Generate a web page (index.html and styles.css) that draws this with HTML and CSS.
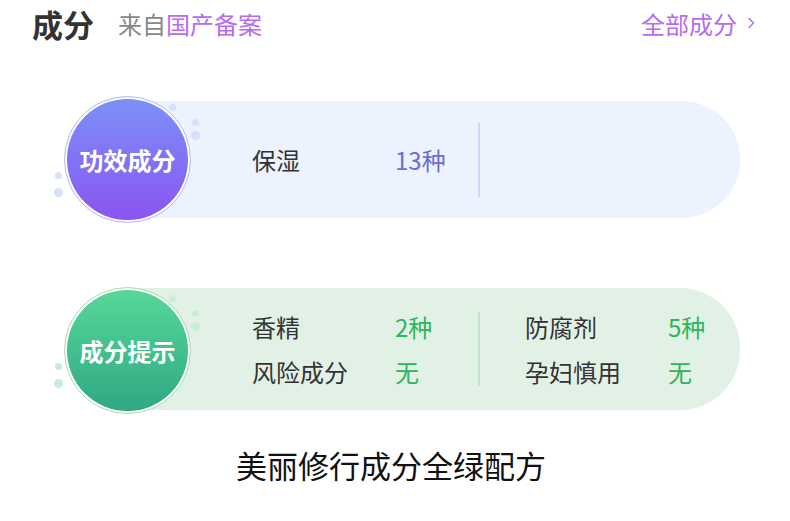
FILE: index.html
```html
<!DOCTYPE html>
<html lang="zh-CN">
<head>
  <meta charset="UTF-8">
  <title>成分</title>
  <link rel="stylesheet" href="styles.css">
</head>
<body>
<header class="head">
  <h1 class="head-title">成分</h1>
  <span class="head-from">来自<em>国产备案</em></span>
  <a class="head-more">全部成分
    <svg width="8" height="12" viewBox="0 0 8 12"><polyline points="1.5,1 6.5,6 1.5,11" fill="none" stroke="#b56cf2" stroke-width="1.4"/></svg>
  </a>
</header>

<div class="cards">
  <div class="card card-blue">
    <div class="badge">
      <span class="dot d1"></span><span class="dot d2"></span><span class="dot d3"></span>
      <span class="dot d4"></span><span class="dot d5"></span>
      <div class="badge-in">功效成分</div>
    </div>
    <div class="band">
      <div class="group">
        <div class="label">保湿</div><div class="val">13种</div>
      </div>
      <div class="sep"></div>
      <div class="group"></div>
    </div>
  </div>

  <div class="card card-green">
    <div class="badge">
      <span class="dot d1"></span><span class="dot d2"></span><span class="dot d3"></span>
      <span class="dot d4"></span><span class="dot d5"></span>
      <div class="badge-in">成分提示</div>
    </div>
    <div class="band">
      <div class="group">
        <div class="label">香精</div><div class="val">2种</div>
        <div class="label">风险成分</div><div class="val">无</div>
      </div>
      <div class="sep"></div>
      <div class="group">
        <div class="label">防腐剂</div><div class="val">5种</div>
        <div class="label">孕妇慎用</div><div class="val">无</div>
      </div>
    </div>
  </div>
</div>

<p class="foot">美丽修行成分全绿配方</p>
</body>
</html>
```

FILE: styles.css
```css
html, body {
  margin: 0;
  padding: 0;
  background: #fff;
  font-family: "Noto Sans CJK SC", "Noto Sans", sans-serif;
  color: #333;
}
.head {
  display: flex;
  align-items: center;
  height: 46px;
  padding: 0 35px 0 32px;
}
.head-title {
  margin: 0;
  font-size: 31px;
  font-weight: 700;
  color: #333;
  line-height: 1;
}
.head-from {
  margin-left: 24px;
  font-size: 24px;
  color: #888;
}
.head-from em {
  font-style: normal;
  color: #b56cf2;
}
.head-more {
  margin-left: auto;
  font-size: 24px;
  color: #b56cf2;
  display: flex;
  align-items: center;
  gap: 10px;
}
.cards {
  padding: 50px 50px 0 64px;
  display: flex;
  flex-direction: column;
  gap: 64px;
}
.card {
  display: flex;
  align-items: center;
}
.badge {
  position: relative;
  flex-shrink: 0;
  width: 127px;
  height: 127px;
  z-index: 1;
}
.badge-in {
  box-sizing: border-box;
  width: 127px;
  height: 127px;
  border-radius: 50%;
  border: 1px solid #a8bcf6;
  padding: 2px;
  background: linear-gradient(#7b90f9, #8a55f1) content-box, #fff;
  color: #fff;
  font-size: 24px;
  font-weight: 700;
  display: flex;
  align-items: center;
  justify-content: center;
  position: relative;
}
.dot {
  position: absolute;
  border-radius: 50%;
  background: #d6e1fb;
  width: 7px;
  height: 7px;
}
.d1 { left: 105px; top: 8px; }
.d2 { left: 128px; top: 23px; }
.d3 { left: 127px; top: 35px; width: 9px; height: 9px; }
.d4 { left: -9px; top: 76px; }
.d5 { left: -10px; top: 92px; width: 9px; height: 9px; }
.band {
  flex: 1;
  min-width: 0;
  margin-left: -64px;
  padding-left: 125px;
  height: 117px;
  border-radius: 0 60px 60px 0;
  background: #ecf2fe;
  display: flex;
  align-items: center;
  font-size: 24px;
}
.group {
  display: grid;
  grid-template-columns: 143px auto;
  line-height: 45px;
  width: 226px;
  flex-shrink: 0;
}
.group + .sep + .group {
  width: auto;
  padding-left: 45px;
}
.label { color: #333; }
.val { color: #6a6dd6; }
.sep {
  flex-shrink: 0;
  width: 2px;
  height: 74px;
  background: #c8d8f6;
}
.card-green .band {
  height: 122px;
  margin-top: -4px;
  background: #e2f1e5;
}
.card-green .badge-in {
  border-color: #a9dcb1;
  background: linear-gradient(#56d897, #2fa884) content-box, #fff;
}
.card-green .dot { background: #c9eed7; }
.card-green .val { color: #2eb55c; }
.card-green .sep { background: #bfe4c8; }
.foot {
  margin: 31px 0 0;
  padding-right: 8px;
  text-align: center;
  font-size: 31px;
  line-height: 40px;
  color: #111;
}
```
